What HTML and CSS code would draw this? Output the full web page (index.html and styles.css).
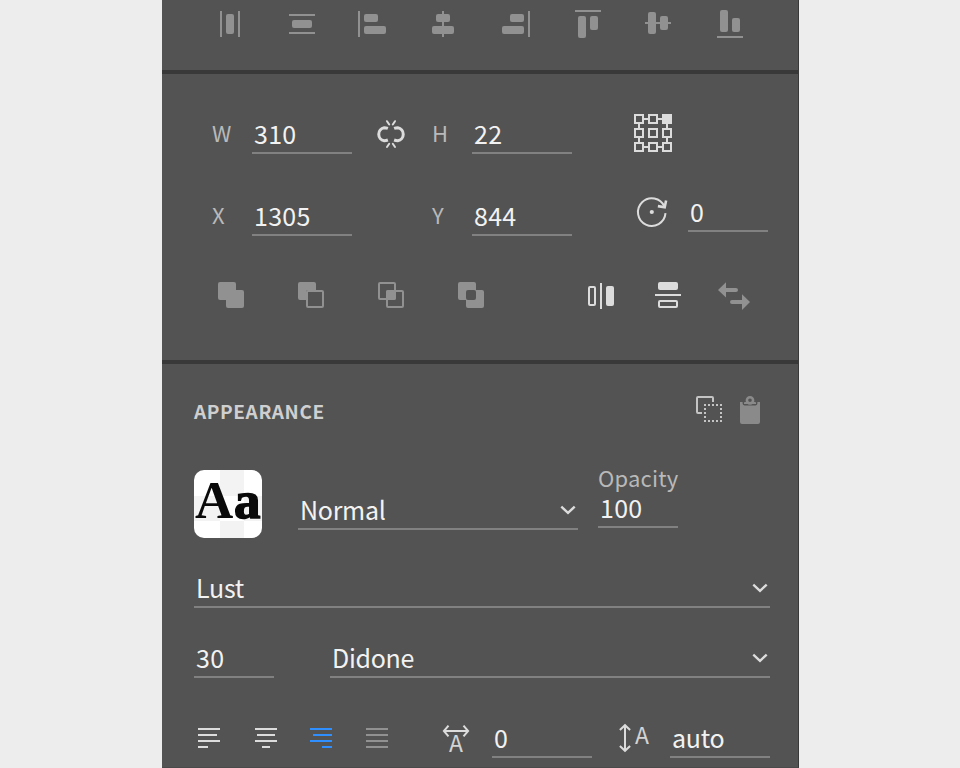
FILE: index.html
```html
<!DOCTYPE html>
<html lang="en">
<head>
<meta charset="utf-8">
<title>Property inspector</title>
<link rel="stylesheet" href="styles.css">
</head>
<body>
<main class="panel">
  <section class="align-tools">
    <svg viewBox="0 0 28 28"><path d="M4 1h2v26H4zM22 1h2v26h-2z"/><rect x="10" y="4" width="8" height="20" rx="2"/></svg>
    <svg viewBox="0 0 28 28"><path d="M1 4h26v2H1zM1 22h26v2H1z"/><rect x="4" y="10" width="20" height="8" rx="2"/></svg>
    <svg viewBox="0 0 28 28"><path d="M0 1h2v26H0z"/><rect x="6" y="4" width="14" height="8" rx="2"/><rect x="6" y="16" width="22" height="8" rx="2"/></svg>
    <svg viewBox="0 0 28 28"><path d="M13 1h2v26h-2z"/><rect x="7" y="4" width="14" height="8" rx="2"/><rect x="3" y="16" width="22" height="8" rx="2"/></svg>
    <svg viewBox="0 0 28 28"><path d="M26 1h2v26h-2z"/><rect x="8" y="4" width="14" height="8" rx="2"/><rect x="0" y="16" width="22" height="8" rx="2"/></svg>
    <svg viewBox="0 0 28 28"><path d="M1 0h26v2H1z"/><rect x="4" y="6" width="8" height="22" rx="2"/><rect x="16" y="6" width="8" height="14" rx="2"/></svg>
    <svg viewBox="0 0 28 28"><path d="M1 12h26v2H1z"/><rect x="4" y="2" width="8" height="22" rx="2"/><rect x="16" y="6" width="8" height="14" rx="2"/></svg>
    <svg viewBox="0 0 28 28"><path d="M1 26h26v2H1z"/><rect x="4" y="0" width="8" height="22" rx="2"/><rect x="16" y="8" width="8" height="14" rx="2"/></svg>
  </section>

  <section class="transform">
    <div class="transform-row">
      <span class="label">W</span><div class="field w100">310</div>
      <svg class="link" viewBox="0 0 30 28" width="30" height="28"><path class="thick" d="M11.9 8.4Q10 7.7 8.2 7.7a6.6 6.6 0 0 0 0 13Q10 20.7 11.9 20M18.1 8.4Q20 7.7 21.8 7.7a6.6 6.6 0 0 1 0 13Q20 20.7 18.1 20"/><path class="thin" d="M11 1.2l2.2 3.3M19 1.2l-2.2 3.3M13.2 23.8L11 27M16.8 23.8L19 27"/></svg>
      <span class="label">H</span><div class="field w100">22</div>
      <svg class="anchors" viewBox="0 0 38 38" width="38" height="38"><g class="line"><rect x="1" y="1" width="8" height="8"/><rect x="15" y="1" width="8" height="8"/><rect class="on" x="29" y="1" width="8" height="8"/><rect x="1" y="15" width="8" height="8"/><rect x="15" y="15" width="8" height="8"/><rect x="29" y="15" width="8" height="8"/><rect x="1" y="29" width="8" height="8"/><rect x="15" y="29" width="8" height="8"/><rect x="29" y="29" width="8" height="8"/><path d="M10 5h4M24 5h4M10 33h4M24 33h4M5 10v4M5 24v4M33 10v4M33 24v4"/></g></svg>
    </div>
    <div class="transform-row second">
      <span class="label">X</span><div class="field w100">1305</div>
      <span></span>
      <span class="label">Y</span><div class="field w100">844</div>
      <div class="rotation">
        <svg viewBox="0 0 32 32" width="32" height="32"><path class="line" d="M29.5 17.2A13.8 13.8 0 1 1 28.4 10.6"/><path class="head" d="M30.1 4.6L28.7 11.3L21.9 10.1"/><circle cx="15.8" cy="16" r="2.1"/></svg>
        <div class="field w80">0</div>
      </div>
    </div>
    <div class="shape-row">
      <svg class="dim" viewBox="0 0 26 26" width="26" height="26"><rect width="18" height="18" rx="2"/><rect x="8" y="8" width="18" height="18" rx="2"/></svg>
      <svg class="dim" viewBox="0 0 26 26" width="26" height="26"><path d="M2 0h14a2 2 0 0 1 2 2v6h-8a2 2 0 0 0-2 2v8H2a2 2 0 0 1-2-2V2a2 2 0 0 1 2-2z"/><rect class="line" x="9" y="9" width="16" height="16" rx="1"/></svg>
      <svg class="dim" viewBox="0 0 26 26" width="26" height="26"><rect class="line" x="1" y="1" width="16" height="16" rx="1"/><rect class="line" x="9" y="9" width="16" height="16" rx="1"/><rect x="8" y="8" width="10" height="10" rx="2"/></svg>
      <svg class="dim" viewBox="0 0 26 26" width="26" height="26"><path fill-rule="evenodd" d="M2 0h14a2 2 0 0 1 2 2v6h6a2 2 0 0 1 2 2v14a2 2 0 0 1-2 2H10a2 2 0 0 1-2-2v-6H2a2 2 0 0 1-2-2V2a2 2 0 0 1 2-2zM10 8a2 2 0 0 0-2 2v6a2 2 0 0 0 2 2h6a2 2 0 0 0 2-2v-6a2 2 0 0 0-2-2z"/></svg>
      <svg class="flip-h" viewBox="0 0 26 28" width="26" height="28"><rect class="line" x="1" y="5" width="6" height="18" rx="1"/><path d="M12 1h2v26h-2z"/><rect x="18" y="4" width="8" height="20" rx="2"/></svg>
      <svg class="flip-v" viewBox="0 0 26 26" width="26" height="26"><rect x="3" y="0" width="20" height="8" rx="2"/><path d="M0 12h26v2H0z"/><rect class="line" x="4" y="19" width="18" height="6" rx="1"/></svg>
      <svg class="swap dim" viewBox="0 0 32 28" width="32" height="28"><path d="M0 8.1L8 .3v5.6h10a2 2 0 0 1 0 4H8v5.6zM32 20.1l-8-7.8v5.8H14a2 2 0 0 0 0 4h10v5.8z"/></svg>
    </div>
  </section>

  <section class="appearance">
    <header>
      <h2>APPEARANCE</h2>
      <svg class="copy" viewBox="0 0 26 26" width="26" height="26"><path class="line" d="M6 17H2a1 1 0 0 1-1-1V2a1 1 0 0 1 1-1h14a1 1 0 0 1 1 1v4"/><path class="dots" d="M8 9h18M8 25h18"/><path class="dots" d="M9 12v12M25 12v12"/></svg>
      <svg class="clip" viewBox="0 0 20 28" width="20" height="28"><path d="M0 6h2.6v1.6q0 1.8 1.8 1.8h11.2q1.8 0 1.8-1.8V6H20v20a2 2 0 0 1-2 2H2a2 2 0 0 1-2-2zM4 8V6.8Q4 6 5 6h10q1 0 1 .8V8z"/><circle class="line" cx="10" cy="4.3" r="3.1"/></svg>
    </header>

    <div class="style-row">
      <div class="thumb"><span class="cap">A</span><span class="low">a</span></div>
      <div class="field select words blend"><span>Normal</span><svg viewBox="0 0 16 10" width="16" height="10"><path d="M1.3 1.7L8 7.8l6.7-6.1"/></svg></div>
      <div class="opacity"><div class="caption">Opacity</div><div class="field w80">100</div></div>
    </div>

    <div class="field select words family"><span>Lust</span><svg viewBox="0 0 16 10" width="16" height="10"><path d="M1.3 1.7L8 7.8l6.7-6.1"/></svg></div>

    <div class="size-row">
      <div class="field w80">30</div>
      <div class="field select words weight"><span>Didone</span><svg viewBox="0 0 16 10" width="16" height="10"><path d="M1.3 1.7L8 7.8l6.7-6.1"/></svg></div>
    </div>

    <div class="text-row">
      <svg viewBox="0 0 22 20" width="22" height="20"><path d="M0 0h22v2H0zM0 6h19v2H0zM0 12h22v2H0zM0 18h10v2H0z"/></svg>
      <svg viewBox="0 0 22 20" width="22" height="20"><path d="M0 0h22v2H0zM2 6h18v2H2zM0 12h22v2H0zM7 18h8v2H7z"/></svg>
      <svg class="active" viewBox="0 0 22 20" width="22" height="20"><path d="M0 0h22v2H0zM3 6h19v2H3zM0 12h22v2H0zM12 18h10v2H12z"/></svg>
      <svg class="dim" viewBox="0 0 22 20" width="22" height="20"><path d="M0 0h22v2H0zM0 6h22v2H0zM0 12h22v2H0zM0 18h22v2H0z"/></svg>
      <svg class="tracking" viewBox="0 0 26 30" width="26" height="30"><path class="line" d="M1 7h24M5.5 1.7L.9 7l4.6 5.3M20.5 1.7L25.1 7l-4.6 5.3"/><text x="13" y="28" text-anchor="middle">A</text></svg>
      <div class="field w100">0</div>
      <svg class="leading" viewBox="0 0 30 30" width="30" height="30"><path class="line" d="M6 3v24M.9 7L6 2.2 11.1 7M.9 23L6 27.8l5.1-4.8"/><text x="23" y="21" text-anchor="middle">A</text></svg>
      <div class="field words w100">auto</div>
    </div>
  </section>
</main>
</body>
</html>
```
FILE: styles.css
```css
* { box-sizing: border-box; }

body {
  margin: 0;
  height: 768px;
  overflow: hidden;
  background: #ededed;
  font-family: "Noto Sans CJK SC", "Noto Sans", sans-serif;
  color: #f2f2f2;
}

svg { display: block; flex: none; fill: #dcdcdc; overflow: visible; }
.line { fill: none; stroke: #dcdcdc; stroke-width: 2; }
.dim { fill: #919191; }
.dim .line { stroke: #919191; }

.panel {
  width: 637px;
  height: 768px;
  margin-left: 162px;
  background: #535353;
  border-right: 1px solid #393939;
  border-bottom: 1px solid #4b4a4b;
  overflow: hidden;
}

.field {
  height: 40px;
  padding-left: 2px;
  border-bottom: 2px solid #818181;
  font-size: 25px;
  line-height: 38px;
  letter-spacing: 0.25px;
  white-space: nowrap;
}
.words { letter-spacing: -0.3px; }
.w80 { width: 80px; }
.w100 { width: 100px; }

.select { display: flex; justify-content: space-between; padding-right: 2px; }
.select svg { margin-top: 15px; fill: none; stroke: #dcdcdc; stroke-width: 2.4; }

/* Distribute and align */
.align-tools {
  display: grid;
  grid-template-columns: 72px 70px 71px 73px 72px 70px 72px 28px;
  height: 74px;
  padding: 10px 0 0 54px;
  border-bottom: 4px solid #393939;
}
.align-tools svg { width: 28px; height: 28px; fill: #919191; }

/* Size and position */
.transform {
  height: 290px;
  padding: 40px 0 0 50px;
  border-bottom: 4px solid #393939;
}
.transform-row {
  display: grid;
  grid-template-columns: 40px 100px 80px 40px 100px 62px 140px;
  height: 40px;
}
.transform-row.second { margin-top: 42px; }
.label {
  font-size: 22px;
  line-height: 36px;
  color: #b9b9b9;
}
.link { margin: 6px 0 0 24px; }
.link path { fill: none; stroke: #dcdcdc; stroke-linecap: round; }
.link .thick { stroke-width: 3; stroke-linecap: butt; }
.link .thin { stroke-width: 2; }
.anchors { grid-column: 7; }
.anchors .on { fill: #dcdcdc; }
.rotation { grid-column: 7; display: flex; gap: 20px; margin: -4px 0 0 2px; }
.rotation svg { margin-top: 4px; }
.rotation .head { fill: none; stroke: #dcdcdc; stroke-width: 2.6; }

.shape-row {
  display: flex;
  gap: 54px;
  margin: 46px 0 0 6px;
}
.flip-h { margin-left: 50px; }
.flip-v { margin-left: -13px; }
.swap { margin-left: -17px; }

/* Appearance */
.appearance { padding: 32px 0 0 32px; }
.appearance header { display: flex; height: 28px; }
h2 {
  width: 502px;
  margin: 0;
  font-size: 19px;
  line-height: 30px;
  letter-spacing: 0.6px;
  color: #cfcfcf;
}
.copy .line, .copy .dots { stroke: #c4c4c4; }
.dots { fill: none; stroke-width: 2; stroke-dasharray: 2 2; }
.clip { margin-left: 18px; fill: #8a8a8a; }
.clip .line { stroke: #8a8a8a; stroke-width: 2.6; }

.style-row { display: flex; height: 68px; margin-top: 46px; }
.thumb {
  display: flex;
  width: 68px;
  height: 68px;
  padding-left: 1px;
  border-radius: 10px;
  overflow: hidden;
  color: #0a0a0a;
  font: bold 53px/60px "Liberation Serif", serif;
  background:
    linear-gradient(#f3f3f3, #f3f3f3) 26px 0 / 24px 26px no-repeat,
    linear-gradient(#f3f3f3, #f3f3f3) 0 26px / 26px 25px no-repeat,
    linear-gradient(#f3f3f3, #f3f3f3) 50px 26px / 18px 25px no-repeat,
    linear-gradient(#f3f3f3, #f3f3f3) 26px 51px / 24px 17px no-repeat,
    #fff;
}
.thumb .cap { width: 39px; }
.thumb .low { -webkit-text-stroke: 1.5px #0a0a0a; }
.blend { width: 280px; margin: 20px 0 0 36px; }
.opacity { margin-left: 20px; }
.caption {
  height: 18px;
  font-size: 22px;
  line-height: 14px;
  letter-spacing: 0.2px;
  color: #b9b9b9;
}
.family { width: 576px; margin-top: 30px; }
.size-row { display: flex; gap: 56px; margin-top: 30px; }
.weight { width: 440px; }

.text-row { display: flex; margin-top: 40px; }
.text-row svg { margin: 10px 0 0 33px; }
.text-row svg:first-child { margin-left: 4px; }
.text-row svg:nth-child(2) { margin-left: 35px; }
.text-row svg:nth-child(4) { margin-left: 34px; }
.text-row .active { fill: #2f8fff; }
.text-row text { font-size: 23px; fill: #d4d4d4; }
.text-row .tracking { margin: 6px 23px 0 55px; }
.text-row .leading { margin: 5px 21px 0 27px; }
```
